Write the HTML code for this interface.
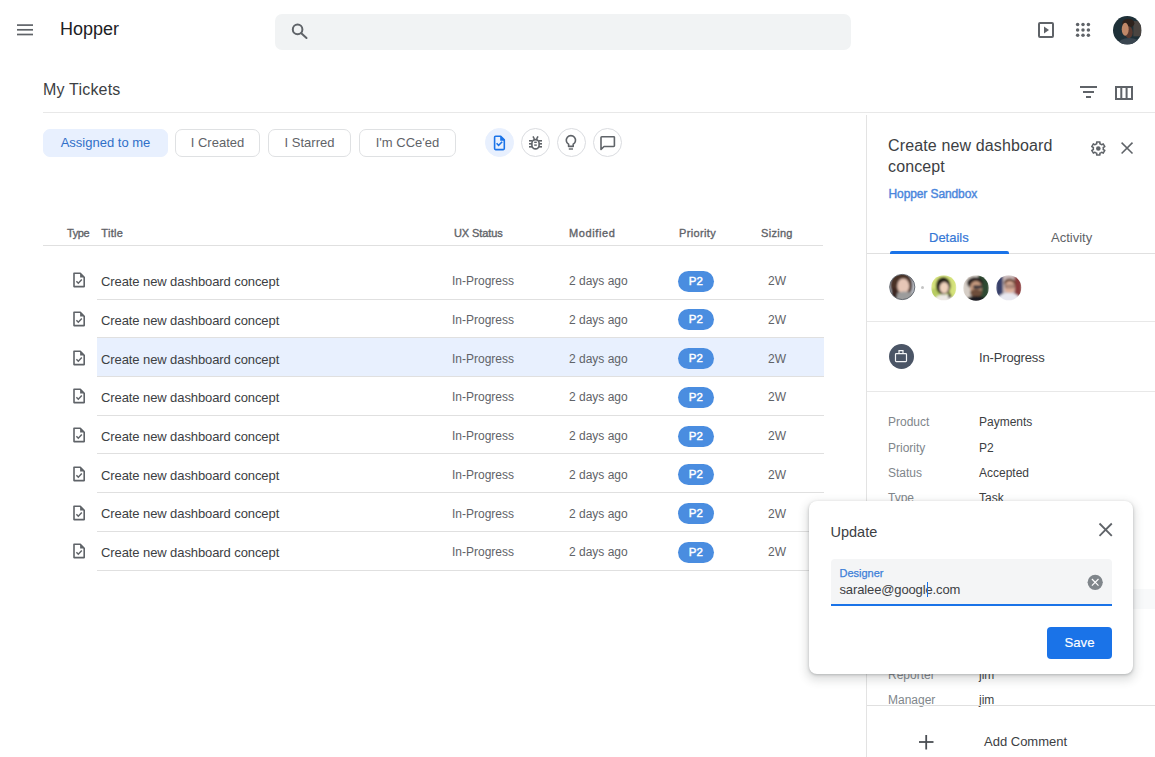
<!DOCTYPE html>
<html><head><meta charset="utf-8">
<style>
*{box-sizing:border-box;margin:0;padding:0}
html,body{width:1155px;height:757px;overflow:hidden;background:#fff;font-family:"Liberation Sans",sans-serif;color:#3c4043}
.a{position:absolute;white-space:nowrap}
svg{position:absolute;overflow:visible}
.chip{position:absolute;top:128.8px;height:28px;border:1px solid #dfe1e3;border-radius:7px;font-size:13px;color:#5f6368;text-align:center;line-height:26px}
.ic{position:absolute;top:128px;width:29px;height:29px;border:1px solid #dadce0;border-radius:50%}
.th{position:absolute;top:227px;font-size:11px;font-weight:400;color:#5f6368;-webkit-text-stroke:.35px #5f6368;letter-spacing:.05px}
.row{position:absolute;left:97px;width:726.5px;height:38.7px;border-bottom:1px solid #e0e0e0}
.cell{position:absolute;font-size:12px;color:#5f6368;white-space:nowrap}
.pill{position:absolute;left:678.4px;width:35.2px;height:21px;border-radius:10.5px;background:#4a8de0;color:#fff;font-size:11.5px;font-weight:400;-webkit-text-stroke:.45px #fff;letter-spacing:.2px;text-align:center;line-height:21px}
.dl{position:absolute;left:888px;font-size:12px;color:#80868b}
.dv{position:absolute;left:979px;font-size:12px;color:#3c4043}
</style></head><body>
<!-- header -->
<svg style="left:0;top:0" width="40" height="60"><g stroke="#5f6368" stroke-width="1.7"><line x1="17" y1="25.1" x2="33" y2="25.1"/><line x1="17" y1="29.8" x2="33" y2="29.8"/><line x1="17" y1="34.5" x2="33" y2="34.5"/></g></svg>
<div class="a" style="left:60px;top:19px;font-size:18px;color:#202124">Hopper</div>
<div class="a" style="left:275px;top:14px;width:576px;height:36px;background:#f1f3f4;border-radius:7px"></div>
<svg style="left:0;top:0" width="1" height="1"><g stroke="#5f6368" stroke-width="2" fill="none" stroke-linecap="round"><circle cx="297.6" cy="29.4" r="4.8"/><line x1="301.3" y1="33.2" x2="306.5" y2="38"/></g></svg>
<svg style="left:0;top:0" width="1" height="1"><rect x="1039" y="23" width="14" height="14" rx="1" fill="none" stroke="#5f6368" stroke-width="2"/><path d="M1044 26.5 L1049 30 L1044 33.5Z" fill="#5f6368"/></svg>
<svg style="left:0;top:0" width="1" height="1"><g fill="#5f6368"><circle cx="1077.6" cy="24.6" r="1.75"/><circle cx="1083" cy="24.6" r="1.75"/><circle cx="1088.4" cy="24.6" r="1.75"/><circle cx="1077.6" cy="29.9" r="1.75"/><circle cx="1083" cy="29.9" r="1.75"/><circle cx="1088.4" cy="29.9" r="1.75"/><circle cx="1077.6" cy="35.2" r="1.75"/><circle cx="1083" cy="35.2" r="1.75"/><circle cx="1088.4" cy="35.2" r="1.75"/></g></svg>
<svg style="left:1112.5px;top:15.5px" width="28.5" height="28.5" viewBox="0 0 28 28"><defs><clipPath id="c0"><circle cx="14" cy="14" r="14"/></clipPath></defs><g clip-path="url(#c0)"><rect width="28" height="28" fill="#1e3038"/>
<rect x="20" y="5" width="8" height="15" fill="#4a4440"/>
<ellipse cx="15" cy="7" rx="6" ry="4.2" fill="#2e221c"/>
<ellipse cx="15.5" cy="16" rx="3.8" ry="6" fill="#5a3a30"/>
<ellipse cx="12" cy="13" rx="3.4" ry="6.3" fill="#c08868"/>
<ellipse cx="16" cy="28" rx="11" ry="6.5" fill="#3a4650"/>
</g></svg>

<!-- title row -->
<div class="a" style="left:43px;top:81px;font-size:16px;letter-spacing:.2px;color:#3c4043">My Tickets</div>
<svg style="left:0;top:0" width="1" height="1"><g stroke="#5f6368" stroke-width="2"><line x1="1080" y1="87" x2="1097" y2="87"/><line x1="1083" y1="92" x2="1094" y2="92"/><line x1="1086" y1="97" x2="1091" y2="97"/></g><rect x="1116" y="87" width="16" height="12" fill="none" stroke="#5f6368" stroke-width="2"/><line x1="1121.3" y1="87" x2="1121.3" y2="99" stroke="#5f6368" stroke-width="2"/><line x1="1126.6" y1="87" x2="1126.6" y2="99" stroke="#5f6368" stroke-width="2"/></svg>
<div class="a" style="left:43px;top:112px;width:1112px;height:1px;background:#e8e8e8"></div>

<!-- chips -->
<div class="chip" style="left:43px;width:125px;background:#e8f0fe;border-color:#e8f0fe;color:#2f6fc8">Assigned to me</div>
<div class="chip" style="left:175px;width:85px">I Created</div>
<div class="chip" style="left:268px;width:83px">I Starred</div>
<div class="chip" style="left:359px;width:97px">I'm CCe'ed</div>
<div class="ic" style="left:485px;background:#e8f0fe;border-color:#e8f0fe"></div>
<div class="ic" style="left:521px"></div>
<div class="ic" style="left:557px"></div>
<div class="ic" style="left:593px"></div>
<svg style="left:0;top:0" width="1" height="1">
<path d="M494.6 137.2a1 1 0 0 1 1-1h5.1l3.6 3.7v8.7a1 1 0 0 1-1 1h-7.7a1 1 0 0 1-1-1z" fill="none" stroke="#1a73e8" stroke-width="1.6" stroke-linejoin="round"/>
<path d="M500.2 136.4h0.8l3.5 3.6v0.8h-4.3z" fill="#1a73e8"/>
<path d="M496.6 143.3l2 2 3.6-3.5" fill="none" stroke="#1a73e8" stroke-width="1.6"/>
<g fill="none" stroke="#5f6368" stroke-width="1.6">
<rect x="531.9" y="139.6" width="7.2" height="9.3" rx="3.6"/>
<line x1="529" y1="140.8" x2="532" y2="140.8"/><line x1="529" y1="143.8" x2="532" y2="143.8"/><line x1="529" y1="146.8" x2="532" y2="146.8"/>
<line x1="539" y1="140.8" x2="542" y2="140.8"/><line x1="539" y1="143.8" x2="542" y2="143.8"/><line x1="539" y1="146.8" x2="542" y2="146.8"/>
<line x1="533" y1="136.3" x2="534.4" y2="139"/><line x1="538" y1="136.3" x2="536.6" y2="139"/>
</g>
<g stroke="#5f6368" stroke-width="1.4"><line x1="534.2" y1="142.3" x2="536.8" y2="142.3"/><line x1="534.2" y1="145.1" x2="536.8" y2="145.1"/></g>
<path d="M568.6 146.4v-2.2a4.6 4.6 0 1 1 4.6 0v2.2z" fill="none" stroke="#5f6368" stroke-width="1.6" stroke-linejoin="round"/>
<line x1="568.8" y1="149" x2="573" y2="149" stroke="#5f6368" stroke-width="1.4"/>
<path d="M601 137.5a0.8 0.8 0 0 1 .8-.8h11.8a0.8 0.8 0 0 1 .8.8v8.2a0.8 0.8 0 0 1-.8.8h-9.6l-3 3z" fill="none" stroke="#5f6368" stroke-width="1.6" stroke-linejoin="round"/>
</svg>

<!-- table header -->
<div class="th" style="left:67px;letter-spacing:-.4px">Type</div>
<div class="th" style="left:101.3px;letter-spacing:.3px">Title</div>
<div class="th" style="left:454px;letter-spacing:-.1px">UX Status</div>
<div class="th" style="left:569px;letter-spacing:.6px">Modified</div>
<div class="th" style="left:679px;letter-spacing:.35px">Priority</div>
<div class="th" style="left:761px;letter-spacing:.3px">Sizing</div>
<div class="a" style="left:43px;top:245px;width:780px;height:1px;background:#e0e0e0"></div>
<div class="row" style="top:260.90px;"></div>
<svg style="left:72px;top:272.36px" width="14" height="16" viewBox="0 0 14 16"><path d="M2 1.3h6.3l3.9 3.9v9.4H2z" fill="none" stroke="#5f6368" stroke-width="1.6" stroke-linejoin="round"/><path d="M8.1 1.3v4.1h4.1z" fill="#5f6368"/><path d="M4.4 9.3l1.9 1.9 3.5-3.6" fill="none" stroke="#5f6368" stroke-width="1.5"/></svg>
<div class="cell tt" style="left:101px;top:274.15px;font-size:13px;color:#3c4043;letter-spacing:-.09px">Create new dashboard concept</div>
<div class="cell" style="left:452px;top:274.25px">In-Progress</div>
<div class="cell" style="left:569px;top:274.25px">2 days ago</div>
<div class="pill" style="top:270.75px">P2</div>
<div class="cell" style="left:768px;top:274.25px">2W</div>
<div class="row" style="top:299.61px;"></div>
<svg style="left:72px;top:311.06px" width="14" height="16" viewBox="0 0 14 16"><path d="M2 1.3h6.3l3.9 3.9v9.4H2z" fill="none" stroke="#5f6368" stroke-width="1.6" stroke-linejoin="round"/><path d="M8.1 1.3v4.1h4.1z" fill="#5f6368"/><path d="M4.4 9.3l1.9 1.9 3.5-3.6" fill="none" stroke="#5f6368" stroke-width="1.5"/></svg>
<div class="cell tt" style="left:101px;top:312.86px;font-size:13px;color:#3c4043;letter-spacing:-.09px">Create new dashboard concept</div>
<div class="cell" style="left:452px;top:312.96px">In-Progress</div>
<div class="cell" style="left:569px;top:312.96px">2 days ago</div>
<div class="pill" style="top:309.46px">P2</div>
<div class="cell" style="left:768px;top:312.96px">2W</div>
<div class="row" style="top:338.32px;background:#e8f0fe;"></div>
<svg style="left:72px;top:349.78px" width="14" height="16" viewBox="0 0 14 16"><path d="M2 1.3h6.3l3.9 3.9v9.4H2z" fill="none" stroke="#5f6368" stroke-width="1.6" stroke-linejoin="round"/><path d="M8.1 1.3v4.1h4.1z" fill="#5f6368"/><path d="M4.4 9.3l1.9 1.9 3.5-3.6" fill="none" stroke="#5f6368" stroke-width="1.5"/></svg>
<div class="cell tt" style="left:101px;top:351.57px;font-size:13px;color:#3c4043;letter-spacing:-.09px">Create new dashboard concept</div>
<div class="cell" style="left:452px;top:351.68px">In-Progress</div>
<div class="cell" style="left:569px;top:351.68px">2 days ago</div>
<div class="pill" style="top:348.18px">P2</div>
<div class="cell" style="left:768px;top:351.68px">2W</div>
<div class="row" style="top:377.03px;"></div>
<svg style="left:72px;top:388.49px" width="14" height="16" viewBox="0 0 14 16"><path d="M2 1.3h6.3l3.9 3.9v9.4H2z" fill="none" stroke="#5f6368" stroke-width="1.6" stroke-linejoin="round"/><path d="M8.1 1.3v4.1h4.1z" fill="#5f6368"/><path d="M4.4 9.3l1.9 1.9 3.5-3.6" fill="none" stroke="#5f6368" stroke-width="1.5"/></svg>
<div class="cell tt" style="left:101px;top:390.28px;font-size:13px;color:#3c4043;letter-spacing:-.09px">Create new dashboard concept</div>
<div class="cell" style="left:452px;top:390.38px">In-Progress</div>
<div class="cell" style="left:569px;top:390.38px">2 days ago</div>
<div class="pill" style="top:386.88px">P2</div>
<div class="cell" style="left:768px;top:390.38px">2W</div>
<div class="row" style="top:415.74px;"></div>
<svg style="left:72px;top:427.20px" width="14" height="16" viewBox="0 0 14 16"><path d="M2 1.3h6.3l3.9 3.9v9.4H2z" fill="none" stroke="#5f6368" stroke-width="1.6" stroke-linejoin="round"/><path d="M8.1 1.3v4.1h4.1z" fill="#5f6368"/><path d="M4.4 9.3l1.9 1.9 3.5-3.6" fill="none" stroke="#5f6368" stroke-width="1.5"/></svg>
<div class="cell tt" style="left:101px;top:429.00px;font-size:13px;color:#3c4043;letter-spacing:-.09px">Create new dashboard concept</div>
<div class="cell" style="left:452px;top:429.10px">In-Progress</div>
<div class="cell" style="left:569px;top:429.10px">2 days ago</div>
<div class="pill" style="top:425.60px">P2</div>
<div class="cell" style="left:768px;top:429.10px">2W</div>
<div class="row" style="top:454.45px;"></div>
<svg style="left:72px;top:465.91px" width="14" height="16" viewBox="0 0 14 16"><path d="M2 1.3h6.3l3.9 3.9v9.4H2z" fill="none" stroke="#5f6368" stroke-width="1.6" stroke-linejoin="round"/><path d="M8.1 1.3v4.1h4.1z" fill="#5f6368"/><path d="M4.4 9.3l1.9 1.9 3.5-3.6" fill="none" stroke="#5f6368" stroke-width="1.5"/></svg>
<div class="cell tt" style="left:101px;top:467.70px;font-size:13px;color:#3c4043;letter-spacing:-.09px">Create new dashboard concept</div>
<div class="cell" style="left:452px;top:467.81px">In-Progress</div>
<div class="cell" style="left:569px;top:467.81px">2 days ago</div>
<div class="pill" style="top:464.31px">P2</div>
<div class="cell" style="left:768px;top:467.81px">2W</div>
<div class="row" style="top:493.16px;"></div>
<svg style="left:72px;top:504.62px" width="14" height="16" viewBox="0 0 14 16"><path d="M2 1.3h6.3l3.9 3.9v9.4H2z" fill="none" stroke="#5f6368" stroke-width="1.6" stroke-linejoin="round"/><path d="M8.1 1.3v4.1h4.1z" fill="#5f6368"/><path d="M4.4 9.3l1.9 1.9 3.5-3.6" fill="none" stroke="#5f6368" stroke-width="1.5"/></svg>
<div class="cell tt" style="left:101px;top:506.41px;font-size:13px;color:#3c4043;letter-spacing:-.09px">Create new dashboard concept</div>
<div class="cell" style="left:452px;top:506.51px">In-Progress</div>
<div class="cell" style="left:569px;top:506.51px">2 days ago</div>
<div class="pill" style="top:503.01px">P2</div>
<div class="cell" style="left:768px;top:506.51px">2W</div>
<div class="row" style="top:531.87px;"></div>
<svg style="left:72px;top:543.33px" width="14" height="16" viewBox="0 0 14 16"><path d="M2 1.3h6.3l3.9 3.9v9.4H2z" fill="none" stroke="#5f6368" stroke-width="1.6" stroke-linejoin="round"/><path d="M8.1 1.3v4.1h4.1z" fill="#5f6368"/><path d="M4.4 9.3l1.9 1.9 3.5-3.6" fill="none" stroke="#5f6368" stroke-width="1.5"/></svg>
<div class="cell tt" style="left:101px;top:545.12px;font-size:13px;color:#3c4043;letter-spacing:-.09px">Create new dashboard concept</div>
<div class="cell" style="left:452px;top:545.23px">In-Progress</div>
<div class="cell" style="left:569px;top:545.23px">2 days ago</div>
<div class="pill" style="top:541.73px">P2</div>
<div class="cell" style="left:768px;top:545.23px">2W</div>

<!-- right panel -->
<div class="a" style="left:866px;top:115px;width:1px;height:642px;background:#e3e3e3"></div>
<div class="a" style="left:888px;top:135px;font-size:16px;line-height:21px;color:#3c4043;letter-spacing:.13px">Create new dashboard<br>concept</div>
<div class="a" style="left:888.5px;top:187px;font-size:12px;font-weight:400;color:#4a86dc;-webkit-text-stroke:.4px #4a86dc;letter-spacing:-.1px">Hopper Sandbox</div>
<svg style="left:0;top:0" width="1" height="1"><path d="M1100.49 144.01 L1099.85 143.74 L1099.95 141.90 L1096.65 141.90 L1096.75 143.74 L1096.11 144.01 L1095.50 144.35 L1094.95 144.78 L1093.41 143.78 L1091.76 146.63 L1093.41 147.46 L1093.31 148.15 L1093.31 148.85 L1093.41 149.54 L1091.76 150.37 L1093.41 153.22 L1094.95 152.22 L1095.50 152.65 L1096.11 152.99 L1096.75 153.26 L1096.65 155.10 L1099.95 155.10 L1099.85 153.26 L1100.49 152.99 L1101.10 152.65 L1101.65 152.22 L1103.19 153.22 L1104.84 150.37 L1103.19 149.54 L1103.29 148.85 L1103.29 148.15 L1103.19 147.46 L1104.84 146.63 L1103.19 143.78 L1101.65 144.78 L1101.10 144.35Z" fill="none" stroke="#5f6368" stroke-width="1.5" stroke-linejoin="round"/><circle cx="1098.3" cy="148.5" r="2.3" fill="#5f6368"/></svg>
<svg style="left:0;top:0" width="1" height="1"><g stroke="#5f6368" stroke-width="1.55"><line x1="1121.6" y1="142.6" x2="1132.5" y2="153.5"/><line x1="1132.5" y1="142.6" x2="1121.6" y2="153.5"/></g></svg>
<div class="a" style="left:929px;top:229.8px;font-size:13px;color:#3577d6;-webkit-text-stroke:.2px #3577d6">Details</div>
<div class="a" style="left:1051px;top:229.8px;font-size:13px;color:#5f6368">Activity</div>
<div class="a" style="left:867px;top:253px;width:288px;height:1px;background:#e0e0e0"></div>
<div class="a" style="left:890px;top:251px;width:119px;height:3px;background:#1a73e8;border-radius:2px 2px 0 0"></div>

<svg style="left:888.5px;top:274px" width="26.5" height="26" viewBox="0 0 26 26"><defs><filter id="fb" filterUnits="userSpaceOnUse" x="-4" y="-4" width="34" height="34"><feGaussianBlur stdDeviation="1"/></filter><clipPath id="c1"><circle cx="13" cy="13" r="12.6"/></clipPath></defs><g clip-path="url(#c1)"><g filter="url(#fb)">
<rect width="26" height="26" fill="#b8bcc4"/>
<ellipse cx="12" cy="11" rx="11" ry="13" fill="#4a3026"/>
<ellipse cx="14" cy="12" rx="6" ry="7.5" fill="#e6c6b6"/>
<ellipse cx="15" cy="23" rx="10" ry="5.5" fill="#9c9c9c"/>
<ellipse cx="5" cy="20" rx="3" ry="6" fill="#3a2620"/>
</g></g><circle cx="13" cy="13" r="12.6" fill="none" stroke="#5a6068" stroke-width="0.9"/></svg>
<div class="a" style="left:921px;top:285.5px;width:3.2px;height:3.2px;border-radius:50%;background:#c4c4c4"></div>
<svg style="left:930.5px;top:274.5px" width="25.5" height="25.5" viewBox="0 0 26 26"><defs><clipPath id="c2"><circle cx="13" cy="13" r="12.8"/></clipPath></defs><g clip-path="url(#c2)"><g filter="url(#fb)">
<rect width="26" height="26" fill="#d4e27a"/>
<rect x="0" y="14" width="10" height="12" fill="#b8cc60"/>
<ellipse cx="12.5" cy="11" rx="7.5" ry="9" fill="#221a18"/>
<ellipse cx="13.5" cy="13" rx="4.6" ry="5.8" fill="#f0d2bc"/>
<ellipse cx="13" cy="25" rx="9" ry="5" fill="#eeeae6"/>
<path d="M17 14 L21 22 L18 24z" fill="#2a201c"/>
</g></g></svg>
<svg style="left:963px;top:274.5px" width="26" height="26" viewBox="0 0 26 26"><defs><clipPath id="c3"><circle cx="13" cy="13" r="12.8"/></clipPath></defs><g clip-path="url(#c3)"><g filter="url(#fb)">
<rect width="26" height="26" fill="#d6cec6"/>
<rect x="15" y="0" width="11" height="26" fill="#2e4a32"/>
<ellipse cx="12" cy="8" rx="8" ry="6" fill="#2a2220"/>
<ellipse cx="13" cy="13" rx="6" ry="7" fill="#c69a7e"/>
<rect x="10" y="10.5" width="9" height="3" rx="1.4" fill="#1c2430"/>
<ellipse cx="13" cy="18" rx="6" ry="4" fill="#6e4e3a"/>
<ellipse cx="13" cy="26" rx="11" ry="5" fill="#1e1e20"/>
</g></g></svg>
<svg style="left:995.5px;top:274.5px" width="25.5" height="25.5" viewBox="0 0 26 26"><defs><clipPath id="c4"><circle cx="13" cy="13" r="12.8"/></clipPath></defs><g clip-path="url(#c4)"><g filter="url(#fb)">
<rect width="26" height="26" fill="#c8b8b8"/>
<rect x="0" y="0" width="7" height="26" fill="#38406a"/>
<rect x="19" y="0" width="7" height="26" fill="#8a3a3a"/>
<ellipse cx="14" cy="8" rx="6" ry="4.5" fill="#6a4a38"/>
<ellipse cx="14" cy="12.5" rx="5.2" ry="6.2" fill="#deb09a"/>
<rect x="9.5" y="10.5" width="9" height="2.4" rx="1" fill="none" stroke="#3a3030" stroke-width="0.8"/>
<ellipse cx="13" cy="24" rx="11" ry="6" fill="#e8e8f0"/>
</g></g></svg>

<div class="a" style="left:867px;top:321px;width:288px;height:1px;background:#e8e8e8"></div>
<div class="a" style="left:888.6px;top:343.8px;width:25px;height:25px;border-radius:50%;background:#4b5566"></div>
<svg style="left:0;top:0" width="1" height="1"><rect x="895.5" y="353.6" width="11" height="8" rx="0.8" fill="none" stroke="#f4f5f7" stroke-width="1.2"/><path d="M899 353.6v-2.9h4v2.9" fill="none" stroke="#f4f5f7" stroke-width="1.2"/></svg>
<div class="a" style="left:979px;top:350px;font-size:13px;color:#3c4043;letter-spacing:-.15px">In-Progress</div>
<div class="a" style="left:867px;top:390.5px;width:288px;height:1px;background:#e8e8e8"></div>
<div class="dl" style="top:415px">Product</div><div class="dv" style="top:415px">Payments</div>
<div class="dl" style="top:440.5px">Priority</div><div class="dv" style="top:440.5px">P2</div>
<div class="dl" style="top:466px">Status</div><div class="dv" style="top:466px">Accepted</div>
<div class="dl" style="top:491px">Type</div><div class="dv" style="top:491px">Task</div>
<div class="a" style="left:867px;top:589px;width:288px;height:20px;background:#f8f9fa"></div>
<div class="dl" style="top:668px">Reporter</div><div class="dv" style="top:668px">jim</div>
<div class="dl" style="top:693px">Manager</div><div class="dv" style="top:693px">jim</div>
<div class="a" style="left:867px;top:705px;width:288px;height:1px;background:#e0e0e0"></div>
<svg style="left:0;top:0" width="1" height="1"><g stroke="#4a4e53" stroke-width="1.8"><line x1="919" y1="742" x2="933.5" y2="742"/><line x1="926.2" y1="735" x2="926.2" y2="749.5"/></g></svg>
<div class="a" style="left:984px;top:734px;font-size:13px;color:#3c4043">Add Comment</div>

<!-- popup -->
<div class="a" style="left:809px;top:501px;width:324px;height:173px;background:#fff;border-radius:8px;box-shadow:0 1px 3px rgba(60,64,67,.3),0 4px 8px 3px rgba(60,64,67,.15)"></div>
<div class="a" style="left:830.5px;top:524px;font-size:14.5px;color:#3c4043">Update</div>
<svg style="left:0;top:0" width="1" height="1"><g stroke="#5f6368" stroke-width="1.8"><line x1="1099.5" y1="523.5" x2="1111.8" y2="535.8"/><line x1="1111.8" y1="523.5" x2="1099.5" y2="535.8"/></g></svg>
<div class="a" style="left:831px;top:559px;width:281px;height:46.5px;background:#f4f5f6;border-radius:4px 4px 0 0;border-bottom:2px solid #1a73e8"></div>
<div class="a" style="left:839.5px;top:567px;font-size:11px;color:#3d80d8;-webkit-text-stroke:.25px #3d80d8">Designer</div>
<div class="a" style="left:839.5px;top:582px;font-size:13px;color:#3c4043;letter-spacing:-.13px">saralee@google.com</div>
<div class="a" style="left:927px;top:582px;width:1px;height:15px;background:#1a73e8"></div>
<svg style="left:0;top:0" width="1" height="1"><circle cx="1095.2" cy="582.3" r="7.6" fill="#80868b"/><g stroke="#fff" stroke-width="1.15"><line x1="1091.9" y1="579" x2="1098.5" y2="585.6"/><line x1="1098.5" y1="579" x2="1091.9" y2="585.6"/></g></svg>
<div class="a" style="left:1047px;top:627px;width:65px;height:32px;background:#1a73e8;border-radius:4px;color:#fff;font-size:13.2px;text-align:center;line-height:32px;-webkit-text-stroke:.15px #fff">Save</div>
</body></html>
